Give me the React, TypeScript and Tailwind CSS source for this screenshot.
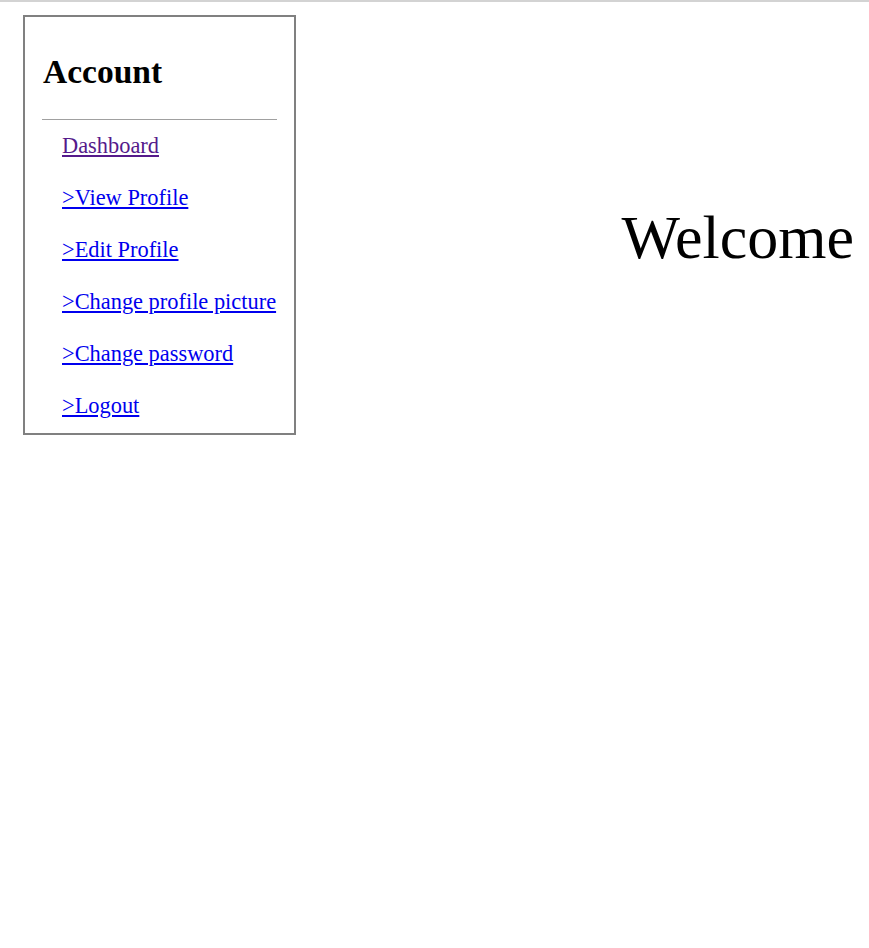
const links = [
  { label: "Dashboard", visited: true },
  { label: ">View Profile" },
  { label: ">Edit Profile" },
  { label: ">Change profile picture" },
  { label: ">Change password" },
  { label: ">Logout" },
];

export default function App() {
  return (
    <div className="min-h-[948px] bg-white border-t-2 border-[#d3d3d3] font-['Liberation_Serif',serif] text-black">
      <div className="flex items-start">
        <aside className="ml-[23px] mt-[13px] w-[273px] border-2 border-[#808080] px-[17px] pt-[36px] pb-[15px]">
          <h1 className="text-[33.5px] font-bold leading-[38px] pl-[1px]">Account</h1>
          <hr className="mt-[28px] border-0 border-t border-[#a0a0a0]" />
          <nav className="mt-[13px] pl-[20px] flex flex-col gap-[27px]">
            {links.map((l) => (
              <a
                key={l.label}
                href="#"
                className={`text-[22.4px] leading-[25px] underline whitespace-nowrap ${
                  l.visited ? "text-[#551a8b]" : "text-[#0000ee]"
                }`}
              >
                {l.label}
              </a>
            ))}
          </nav>
        </aside>
        <main className="flex-1 flex justify-end pr-[15px] pt-[200px]">
          <p className="text-[62px] leading-[70px]">Welcome</p>
        </main>
      </div>
    </div>
  );
}
